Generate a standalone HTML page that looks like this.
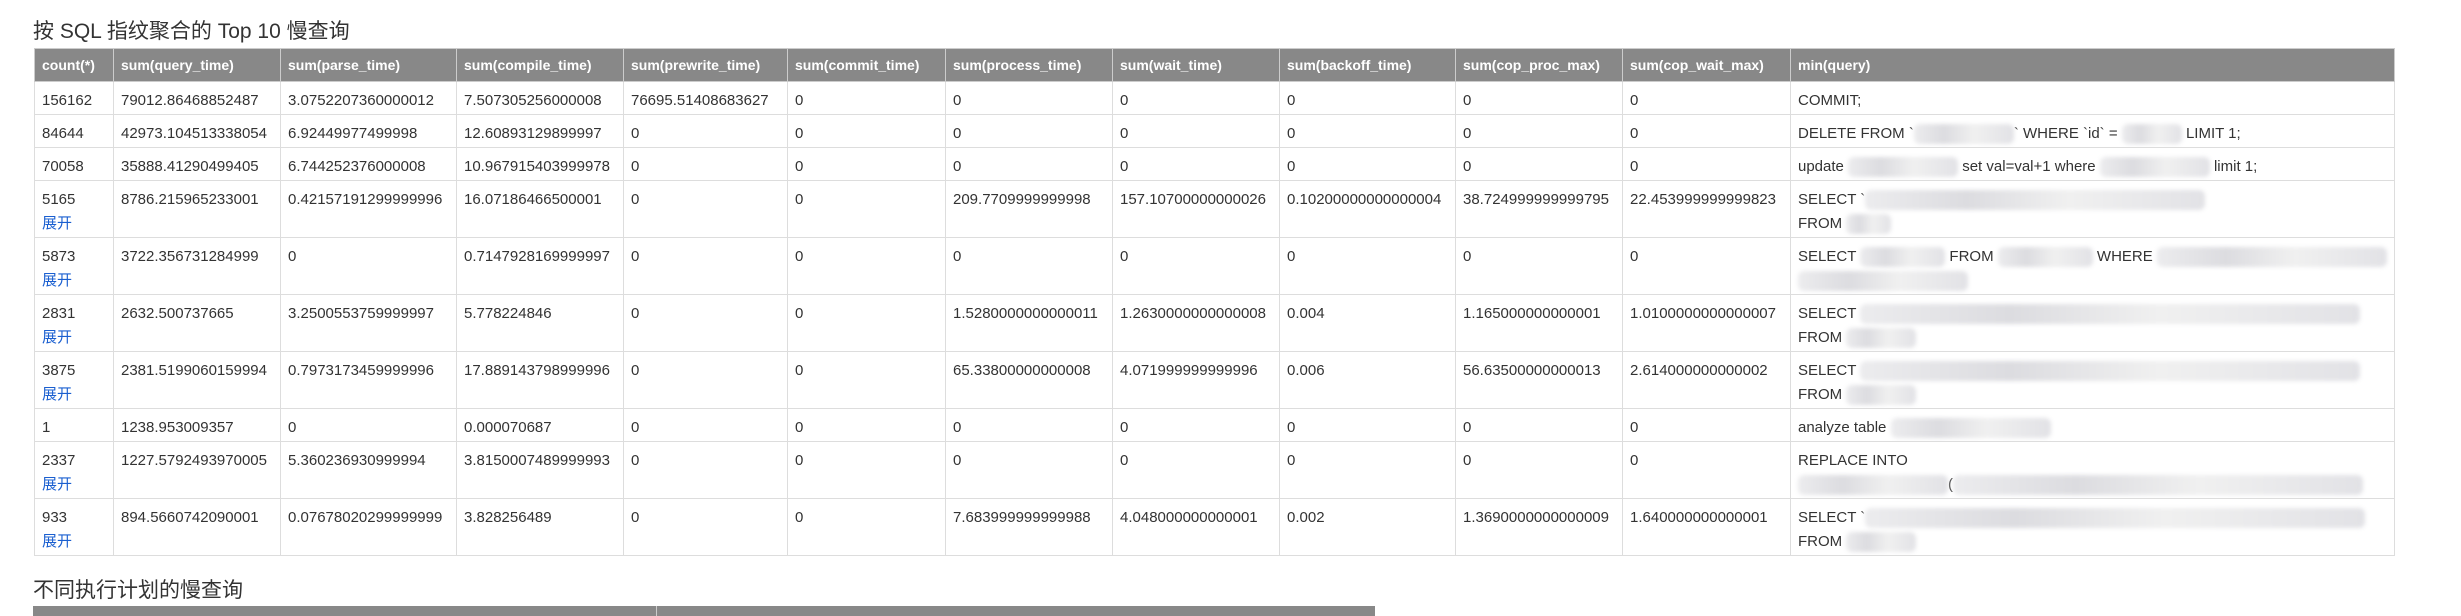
<!DOCTYPE html>
<html><head><meta charset="utf-8"><style>
body{margin:0;background:#fff;font-family:"Liberation Sans","Noto Sans CJK SC",sans-serif;color:#333;width:2461px;height:614px;overflow:hidden;position:relative}
h3{position:absolute;left:33px;margin:0;font-weight:normal;font-size:21px;color:#333;line-height:24px}
table{position:absolute;left:34px;top:48px;border-collapse:collapse;table-layout:fixed;font-size:15px}
th{background:#888;color:#fff;font-weight:bold;font-size:14px;text-align:left;height:32px;padding:0 7px;border:1px solid #ccc;white-space:nowrap;overflow:hidden}
td{border:1px solid #ddd;vertical-align:top;padding:7px 7px 0;white-space:nowrap;overflow:hidden;line-height:24px;height:25px}
tr.d td{height:49px}
a{color:#1a5fd0;text-decoration:none}
.b{display:inline-block;height:20px;vertical-align:middle;background:linear-gradient(90deg,#ececee,#dcdce0 30%,#f0f0f0 60%,#e2e2e6);filter:blur(2px);border-radius:6px}
</style></head><body>
<h3 style="top:20px">按 SQL 指纹聚合的 Top 10 慢查询</h3>
<table>
<colgroup><col style="width:79px"><col style="width:167px"><col style="width:176px"><col style="width:167px"><col style="width:164px"><col style="width:158px"><col style="width:167px"><col style="width:167px"><col style="width:176px"><col style="width:167px"><col style="width:168px"><col style="width:587px"></colgroup>
<tr><th>count(*)</th><th>sum(query_time)</th><th>sum(parse_time)</th><th>sum(compile_time)</th><th>sum(prewrite_time)</th><th>sum(commit_time)</th><th>sum(process_time)</th><th>sum(wait_time)</th><th>sum(backoff_time)</th><th>sum(cop_proc_max)</th><th>sum(cop_wait_max)</th><th>min(query)</th></tr>
<tr><td>156162</td><td>79012.86468852487</td><td>3.0752207360000012</td><td>7.507305256000008</td><td>76695.51408683627</td><td>0</td><td>0</td><td>0</td><td>0</td><td>0</td><td>0</td><td>COMMIT;</td></tr>
<tr><td>84644</td><td>42973.104513338054</td><td>6.92449977499998</td><td>12.60893129899997</td><td>0</td><td>0</td><td>0</td><td>0</td><td>0</td><td>0</td><td>0</td><td>DELETE FROM `<span class="b" style="width:100px"></span>` WHERE `id` = <span class="b" style="width:60px"></span> LIMIT 1;</td></tr>
<tr><td>70058</td><td>35888.41290499405</td><td>6.744252376000008</td><td>10.967915403999978</td><td>0</td><td>0</td><td>0</td><td>0</td><td>0</td><td>0</td><td>0</td><td>update <span class="b" style="width:110px"></span> set val=val+1 where <span class="b" style="width:110px"></span> limit 1;</td></tr>
<tr class="d"><td>5165<br><a>展开</a></td><td>8786.215965233001</td><td>0.42157191299999996</td><td>16.07186466500001</td><td>0</td><td>0</td><td>209.7709999999998</td><td>157.10700000000026</td><td>0.10200000000000004</td><td>38.724999999999795</td><td>22.453999999999823</td><td>SELECT `<span class="b" style="width:340px"></span><br>FROM <span class="b" style="width:45px"></span></td></tr>
<tr class="d"><td>5873<br><a>展开</a></td><td>3722.356731284999</td><td>0</td><td>0.7147928169999997</td><td>0</td><td>0</td><td>0</td><td>0</td><td>0</td><td>0</td><td>0</td><td>SELECT <span class="b" style="width:85px"></span> FROM <span class="b" style="width:95px"></span> WHERE <span class="b" style="width:230px"></span><br><span class="b" style="width:170px"></span></td></tr>
<tr class="d"><td>2831<br><a>展开</a></td><td>2632.500737665</td><td>3.2500553759999997</td><td>5.778224846</td><td>0</td><td>0</td><td>1.5280000000000011</td><td>1.2630000000000008</td><td>0.004</td><td>1.165000000000001</td><td>1.0100000000000007</td><td>SELECT <span class="b" style="width:500px"></span><br>FROM <span class="b" style="width:70px"></span></td></tr>
<tr class="d"><td>3875<br><a>展开</a></td><td>2381.5199060159994</td><td>0.7973173459999996</td><td>17.889143798999996</td><td>0</td><td>0</td><td>65.33800000000008</td><td>4.071999999999996</td><td>0.006</td><td>56.63500000000013</td><td>2.614000000000002</td><td>SELECT <span class="b" style="width:500px"></span><br>FROM <span class="b" style="width:70px"></span></td></tr>
<tr><td>1</td><td>1238.953009357</td><td>0</td><td>0.000070687</td><td>0</td><td>0</td><td>0</td><td>0</td><td>0</td><td>0</td><td>0</td><td>analyze table <span class="b" style="width:160px"></span></td></tr>
<tr class="d"><td>2337<br><a>展开</a></td><td>1227.5792493970005</td><td>5.360236930999994</td><td>3.8150007489999993</td><td>0</td><td>0</td><td>0</td><td>0</td><td>0</td><td>0</td><td>0</td><td>REPLACE INTO<br><span class="b" style="width:150px"></span>(<span class="b" style="width:410px"></span></td></tr>
<tr class="d"><td>933<br><a>展开</a></td><td>894.5660742090001</td><td>0.07678020299999999</td><td>3.828256489</td><td>0</td><td>0</td><td>7.683999999999988</td><td>4.048000000000001</td><td>0.002</td><td>1.3690000000000009</td><td>1.640000000000001</td><td>SELECT `<span class="b" style="width:500px"></span><br>FROM <span class="b" style="width:70px"></span></td></tr>
</table>
<h3 style="top:579px">不同执行计划的慢查询</h3>
<div style="position:absolute;left:33px;top:606px;width:623px;height:10px;background:#888;border-right:1px solid #ccc"></div>
<div style="position:absolute;left:657px;top:606px;width:718px;height:10px;background:#888"></div>
</body></html>
